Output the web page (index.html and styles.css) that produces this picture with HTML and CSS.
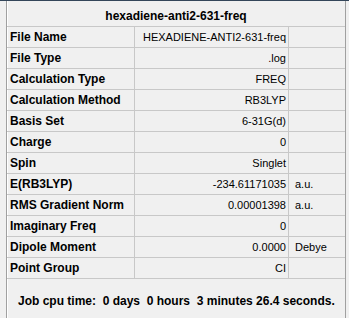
FILE: index.html
```html
<!DOCTYPE html>
<html lang="en">
  <head>
    <meta charset="UTF-8" />
    <title>hexadiene-anti2-631-freq</title>
    <link rel="stylesheet" href="styles.css">
  </head>
  <body>
    <div class="panel">
      <div class="title">hexadiene-anti2-631-freq</div>
      <div class="grid">
        <div class="key">File Name</div><div class="val">HEXADIENE-ANTI2-631-freq</div><div class="unit"></div>
        <div class="key">File Type</div><div class="val">.log</div><div class="unit"></div>
        <div class="key">Calculation Type</div><div class="val">FREQ</div><div class="unit"></div>
        <div class="key">Calculation Method</div><div class="val">RB3LYP</div><div class="unit"></div>
        <div class="key">Basis Set</div><div class="val">6-31G(d)</div><div class="unit"></div>
        <div class="key">Charge</div><div class="val">0</div><div class="unit"></div>
        <div class="key">Spin</div><div class="val">Singlet</div><div class="unit"></div>
        <div class="key">E(RB3LYP)</div><div class="val">-234.61171035</div><div class="unit">a.u.</div>
        <div class="key">RMS Gradient Norm</div><div class="val">0.00001398</div><div class="unit">a.u.</div>
        <div class="key">Imaginary Freq</div><div class="val">0</div><div class="unit"></div>
        <div class="key">Dipole Moment</div><div class="val">0.0000</div><div class="unit">Debye</div>
        <div class="key">Point Group</div><div class="val">CI</div><div class="unit"></div>
      </div>
      <div class="cpu">Job cpu time:  0 days  0 hours  3 minutes 26.4 seconds.</div>
    </div>
  </body>
</html>
```

FILE: styles.css
```css
html, body {
  margin: 0;
  padding: 0;
}
body {
  width: 349px;
  height: 318px;
  overflow: hidden;
  background: #f0f0f0;
  border-top: 1px solid #34465a;
  box-sizing: border-box;
  font-family: 'Liberation Sans', Arial, sans-serif;
  font-size: 11px;
  color: #000;
}
.panel {
  margin-left: 6px;
  width: 340px;
  height: 317px;
  box-sizing: border-box;
  border-left: 1px solid #a0a0a0;
  border-right: 1px solid #a0a0a0;
  box-shadow: inset 1px 0 #ffffff;
}
.title {
  height: 19px;
  padding-top: 6px;
  line-height: 19px;
  text-align: center;
  font-weight: bold;
  font-size: 12px;
  border-bottom: 1px solid #c8c8c8;
}
.grid {
  display: grid;
  grid-template-columns: 128px 154px 1fr;
}
.grid > div {
  height: 20px;
  line-height: 20px;
  border-bottom: 1px solid #c8c8c8;
  white-space: nowrap;
  overflow: hidden;
}
.key {
  font-weight: bold;
  font-size: 12px;
  padding-left: 3px;
  border-right: 1px solid #c8c8c8;
}
.val {
  text-align: right;
  padding-right: 2px;
  border-right: 1px solid #c8c8c8;
}
.unit {
  padding-left: 6px;
}
.cpu {
  padding: 15px 0 0 11px;
  font-weight: bold;
  font-size: 12px;
  white-space: pre;
}
```
